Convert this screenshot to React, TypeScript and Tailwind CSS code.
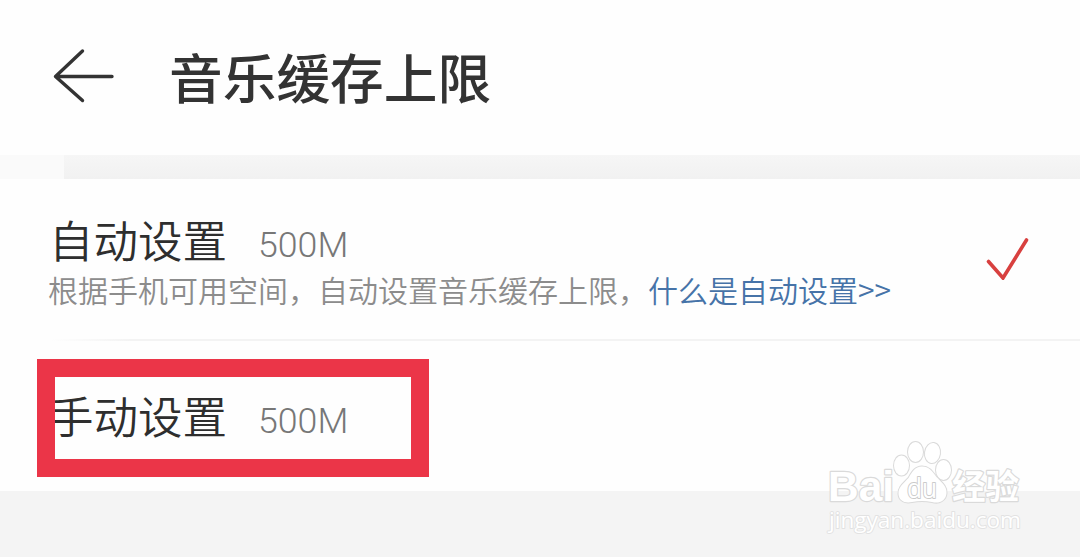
import * as React from 'react';

// ──────────────────────────────────────────────
// Types
// ──────────────────────────────────────────────
type OptionRowProps = { label: string; size: string };

const FONT = "font-['Roboto','Noto_Sans_CJK_SC',sans-serif]";

// ──────────────────────────────────────────────
// Option label with its cache size
// ──────────────────────────────────────────────
function OptionLabel({ label, size }: OptionRowProps) {
  return (
    <div className="flex h-11 items-center whitespace-nowrap">
      <span className="relative -top-[3px] w-[209px] font-['Noto_Sans_CJK_SC',sans-serif] text-[44.500px] leading-[44px] font-[350] text-[#2e2e2e]">
        {label}
      </span>
      <span className="relative top-[3px] text-[35.700px] leading-[44px] font-[350] text-[#777]">{size}</span>
    </div>
  );
}

// ──────────────────────────────────────────────
// Baidu watermark
// ──────────────────────────────────────────────
function Watermark() {
  return (
    <svg
      viewBox="0 0 210 110"
      className="absolute top-[435px] left-[820px] h-[110px] w-[210px]"
      fill="#fff"
      stroke="#dadada"
      strokeWidth="2.4"
      strokeLinejoin="round"
      paintOrder="stroke"
    >
      <text x="8" y="66" fontSize="42" fontWeight="700" fontFamily="Liberation Sans, sans-serif" textLength="66" lengthAdjust="spacingAndGlyphs">
        Bai
      </text>
      <g strokeWidth="2">
        <ellipse cx="81.500" cy="30.500" rx="7.500" ry="10" />
        <ellipse cx="95.500" cy="17" rx="7.500" ry="10" />
        <ellipse cx="112.500" cy="18" rx="7.500" ry="10" transform="rotate(8 112.500 18)" />
        <ellipse cx="123.500" cy="35" rx="7.500" ry="10" />
        <path d="M102 31.500C95 31.500 92 37 88.500 43C84 48 78 52 78.500 59C79 66 85 68.500 92 67C99 65.500 105 65.500 112 67C119 69 126 66 126.500 58C127 51 121 47 116.500 42C112 36 109 31.500 102 31.500Z" />
      </g>
      <text x="87" y="62.500" fontSize="27" fontWeight="400" stroke="#cbcbcb" strokeWidth="2" fontFamily="Open Sans, sans-serif" textLength="30" lengthAdjust="spacingAndGlyphs">
        du
      </text>
      <text x="132" y="64" fontSize="34" fontWeight="700" fontFamily="Noto Sans CJK SC, sans-serif" textLength="67" lengthAdjust="spacingAndGlyphs">
        经验
      </text>
      <text x="9" y="92.500" fontSize="21.500" strokeWidth="1.8" stroke="#e2e2e2" fontFamily="Open Sans, sans-serif" textLength="192" lengthAdjust="spacingAndGlyphs">
        jingyan.baidu.com
      </text>
    </svg>
  );
}

// ──────────────────────────────────────────────
// Cache limit settings
// ──────────────────────────────────────────────
export default function App() {
  return (
    <div className={`relative flex h-[557px] w-[1080px] flex-col overflow-hidden bg-[#f4f4f4] ${FONT}`}>
      <header className="flex h-[155px] shrink-0 items-start bg-[#fefefe] pt-[47px] pl-[52px]">
        <svg viewBox="0 0 64 60" className="h-[60px] w-16" fill="none" stroke="#333" strokeWidth="3.4" strokeLinecap="round" strokeLinejoin="round">
          <path d="M30.500 4L3.500 29.500L30.500 53.500M3.500 29.500H60" />
        </svg>
        <h1 className="-mt-1 ml-[53px] font-['Noto_Sans_CJK_SC',sans-serif] text-[53.700px] leading-[66px] font-medium whitespace-nowrap text-[#333]">
          音乐缓存上限
        </h1>
      </header>

      <div className="flex h-6 shrink-0 bg-linear-to-b from-[#f6f6f6] to-[#f1f1f1]">
        <div className="w-16 bg-[#fafafa]" />
      </div>

      <main className="flex h-[312px] shrink-0 flex-col bg-[#fefefe]">
        <section className="flex h-[160px] items-start justify-between pt-[41px] pl-[49px]">
          <div>
            <OptionLabel label="自动设置" size="500M" />
            <p className="mt-[5px] -ml-px font-['Noto_Sans_CJK_SC',sans-serif] text-[30px] leading-[40px] font-[350] whitespace-nowrap text-[#8c8c8c]">
              根据手机可用空间，自动设置音乐缓存上限，
              <a className="text-[#4673a8]">什么是自动设置&gt;&gt;</a>
            </p>
          </div>
          <svg viewBox="0 0 44 44" className="mt-[16px] mr-[51px] size-11" fill="none" stroke="#d8403f" strokeWidth="3.600" strokeLinecap="round">
            <path d="M3.500 25.500L18 42L41.500 4" />
          </svg>
        </section>

        <div className="ml-[50px] h-0.5 bg-linear-to-r from-[#fefefe] via-[#f3f3f3] via-8% to-[#f3f3f3]" />

        <section className="relative h-[150px] pt-[55px] pl-[49px]">
          <OptionLabel label="手动设置" size="500M" />
          {/* highlight frame */}
          <div className="absolute top-[18px] left-[37px] h-[118px] w-[392px] border-[18px] border-[#eb3548]" />
        </section>
      </main>

      <Watermark />
    </div>
  );
}
